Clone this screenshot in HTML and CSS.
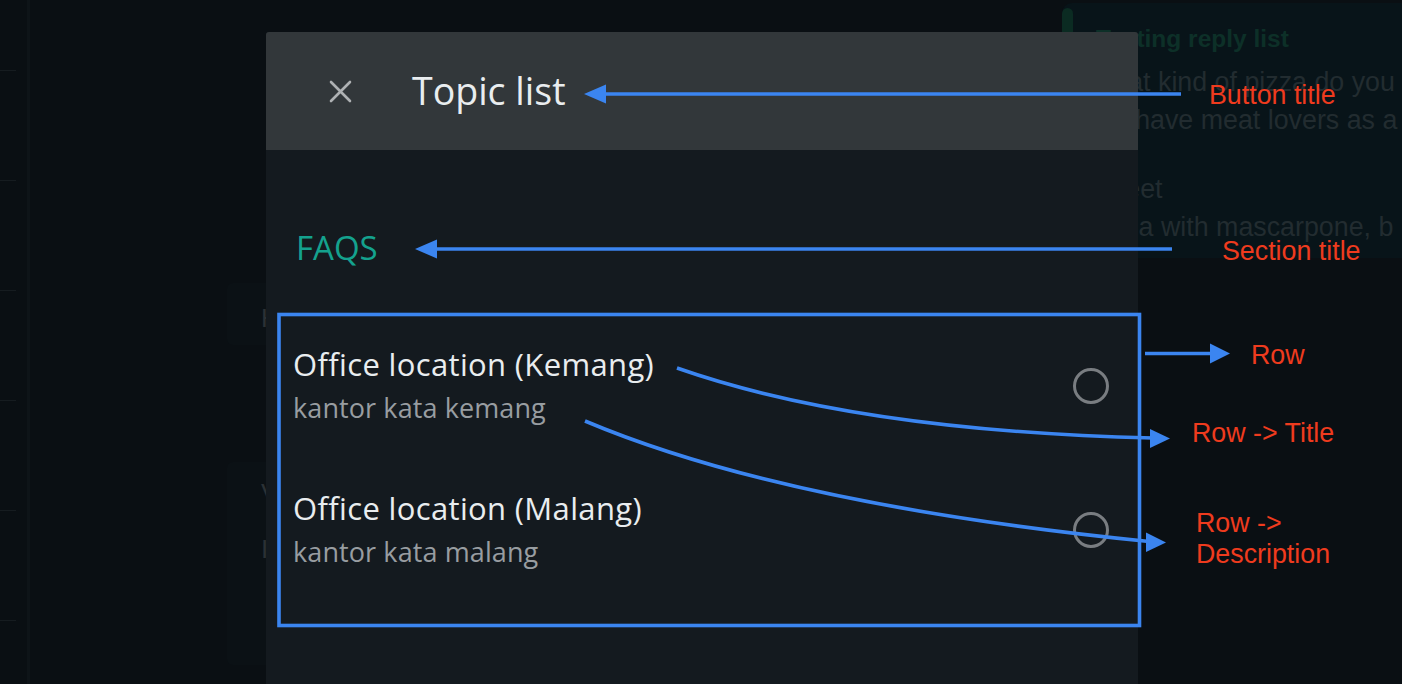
FILE: index.html
```html
<!DOCTYPE html>
<html lang="en">
<head>
<meta charset="utf-8">
<title>Topic list</title>
<link rel="stylesheet" href="styles.css">
</head>
<body>
<div class="app">
  <aside class="sidebar">
    <div class="side-item first"></div>
    <div class="side-item"></div>
    <div class="side-item"></div>
    <div class="side-item"></div>
    <div class="side-item"></div>
    <div class="side-item"></div>
  </aside>
  <main class="chat">
    <div class="card">
      <div class="card-bar"></div>
      <div class="card-text">
        <div class="card-title">Testing reply list</div>
        <div class="card-line">What kind of pizza do you</div>
        <div class="card-line">We have meat lovers as a f</div>
        <div class="card-line spaced">Sweet</div>
        <div class="card-line">Pizza with mascarpone, b</div>
      </div>
    </div>
    <div class="bubble b1"><div class="bubble-line">Hi</div></div>
    <div class="bubble b2">
      <div class="bubble-line">V</div>
      <div class="bubble-line second">In</div>
    </div>
  </main>
</div>

<section class="modal">
  <header class="modal-header">
    <svg class="close" viewBox="0 0 23 23" aria-hidden="true">
      <path d="M2 2 L21 21 M21 2 L2 21" />
    </svg>
    <div class="modal-title">Topic list</div>
  </header>
  <div class="modal-body">
    <div class="section-title">FAQS</div>
    <div class="list">
      <div class="row">
        <div class="row-text">
          <div class="row-title">Office location (Kemang)</div>
          <div class="row-desc">kantor kata kemang</div>
        </div>
        <div class="radio"></div>
      </div>
      <div class="row">
        <div class="row-text">
          <div class="row-title">Office location (Malang)</div>
          <div class="row-desc">kantor kata malang</div>
        </div>
        <div class="radio"></div>
      </div>
    </div>
  </div>
</section>

<svg class="annot" viewBox="0 0 1402 684" width="1402" height="684">
  <g class="blue-line">
    <rect x="279" y="314.5" width="860.5" height="311" />
    <line x1="600" y1="94" x2="1181" y2="94" />
    <line x1="432" y1="249" x2="1172" y2="249" />
    <line x1="1145" y1="353.5" x2="1214" y2="353.5" />
    <path d="M677 368 Q857 431 1153 438" />
    <path d="M585 421 Q784 505 1149 541.5" />
  </g>
  <g class="blue-fill">
    <polygon points="584,94 606,84.5 606,103.5" />
    <polygon points="415,249 437,239.5 437,258.5" />
    <polygon points="1230,353.5 1210,343.5 1210,363.5" />
    <polygon points="1170,438.5 1150,429 1150,448" />
    <polygon points="1166,542.5 1146,532.5 1146,552" />
  </g>
  <g class="lbl">
    <text x="1209" y="104">Button title</text>
    <text x="1222" y="259.5">Section title</text>
    <text x="1251" y="364">Row</text>
    <text x="1192" y="442">Row -&gt; Title</text>
    <text x="1196" y="532">Row -&gt;</text>
    <text x="1196" y="563">Description</text>
  </g>
</svg>
</body>
</html>
```

FILE: styles.css
```css
html, body {
  margin: 0;
  padding: 0;
}

body {
  width: 1402px;
  height: 684px;
  overflow: hidden;
  position: relative;
  background: #0a0f13;
  font-family: "Open Sans", "Liberation Sans", sans-serif;
}

/* ---------- dimmed background app ---------- */
.app {
  display: flex;
  height: 684px;
}

.sidebar {
  width: 27px;
  flex: none;
  border-right: 3px solid #0e1418;
  display: flex;
  flex-direction: column;
}

.side-item {
  height: 110px;
  flex: none;
  display: flex;
  align-items: flex-end;
}

.side-item.first {
  height: 71px;
}

.side-item::after {
  content: "";
  width: 16px;
  height: 1px;
  background: #161c20;
}

.chat {
  flex: 1;
  display: flex;
  flex-direction: column;
  padding-top: 3px;
  font-family: "Liberation Sans", Arial, sans-serif;
}

.card {
  align-self: flex-end;
  width: 340px;
  height: 255px;
  flex: none;
  background: #081419;
  border-radius: 10px 0 0 0;
  display: flex;
  align-items: flex-start;
  overflow: hidden;
}

.card-bar {
  width: 11px;
  height: 40px;
  margin-top: 5px;
  flex: none;
  background: #0b2b22;
  border-radius: 6px 6px 0 0;
}

.card-text {
  margin-left: 15px;
  padding-top: 16.5px;
  white-space: nowrap;
}

.card-title {
  padding-left: 8px;
  font-size: 24.5px;
  font-weight: bold;
  line-height: 38px;
  color: #0d3028;
  margin-bottom: 5.5px;
}

.card-line {
  font-size: 26.8px;
  line-height: 38px;
  color: #222c30;
}

.card-line.spaced {
  margin-top: 31px;
}

.bubble {
  margin-left: 197px;
  width: 320px;
  flex: none;
  background: #0b1115;
  border-radius: 6px;
  box-sizing: border-box;
  padding-left: 34px;
}

.bubble.b1 {
  margin-top: 25px;
  height: 62px;
  padding-top: 16px;
}

.bubble.b2 {
  margin-top: 117px;
  height: 203px;
  padding-top: 12px;
}

.bubble-line {
  font-size: 26px;
  line-height: 38px;
  color: #2b3135;
}

.bubble-line.second {
  margin-top: 18px;
}

/* ---------- modal ---------- */
.modal {
  position: absolute;
  left: 266px;
  top: 32px;
  width: 872px;
  height: 652px;
  background: #141a1f;
  border-radius: 3px 3px 0 0;
  display: flex;
  flex-direction: column;
  overflow: hidden;
}

.modal-header {
  height: 118px;
  flex: none;
  background: #32373a;
  display: flex;
  align-items: center;
  padding-left: 63px;
}

.close {
  width: 23px;
  height: 23px;
  flex: none;
}

.close path {
  stroke: #aeb1b3;
  stroke-width: 2.6;
  stroke-linecap: round;
  fill: none;
}

.modal-title {
  margin-left: 60px;
  font-size: 37.5px;
  line-height: 1;
  color: #e9edef;
}

.modal-body {
  padding-top: 82px;
}

.section-title {
  padding-left: 30px;
  font-size: 33px;
  line-height: 31px;
  color: #14a28e;
}

.list {
  margin-top: 51px;
}

.row {
  display: flex;
  align-items: center;
  padding: 30px 29px 30px 27px;
}

.row-text {
  flex: 1;
  display: flex;
  flex-direction: column;
  gap: 4px;
}

.row-title {
  font-size: 31px;
  letter-spacing: 0.35px;
  line-height: 40px;
  color: #e9edef;
}

.row-desc {
  font-size: 27px;
  letter-spacing: 0.1px;
  line-height: 40px;
  color: #989da1;
}

.radio {
  width: 36px;
  height: 36px;
  flex: none;
  box-sizing: border-box;
  border: 3px solid #797d81;
  border-radius: 50%;
}

/* ---------- annotation overlay ---------- */
.annot {
  position: absolute;
  left: 0;
  top: 0;
  pointer-events: none;
}

.blue-line rect,
.blue-line line,
.blue-line path {
  fill: none;
  stroke: #3b85f0;
  stroke-width: 3.6;
}

.blue-fill polygon {
  fill: #3b85f0;
}

.lbl text {
  font-family: "Liberation Sans", Arial, sans-serif;
  font-size: 26.8px;
  fill: #ef3b1e;
}
```
